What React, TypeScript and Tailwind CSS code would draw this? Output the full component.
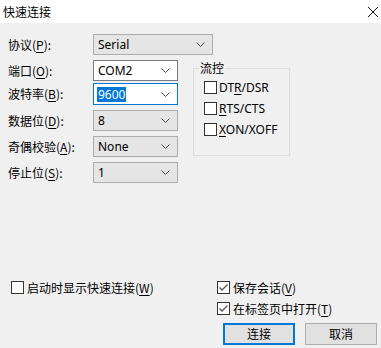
import React from "react";

const CJK = '"Noto Sans CJK SC", "Noto Sans", sans-serif';
const LAT = '"Noto Sans", "Noto Sans CJK SC", sans-serif';

function Chevron() {
  return (
    <svg width="9" height="5" viewBox="0 0 9 5" className="shrink-0">
      <path d="M0.5 0.5 L4.5 4.5 L8.5 0.5" fill="none" stroke="#444" strokeWidth="1" />
    </svg>
  );
}

function Box({ checked }: { checked?: boolean }) {
  return (
    <div className="w-[13px] h-[13px] border border-[#333] bg-white shrink-0 flex items-center justify-center">
      {checked && (
        <svg width="11" height="11" viewBox="0 0 11 11">
          <path d="M1.5 5.5 L4 8 L9.5 2.5" fill="none" stroke="#555" strokeWidth="1.3" />
        </svg>
      )}
    </div>
  );
}

function Label({ text, k }: { text: string; k: string }) {
  return (
    <div className="w-[85px] shrink-0 text-[12px] text-black leading-none" style={{ fontFamily: CJK }}>
      {text}(<span className="underline underline-offset-2">{k}</span>):
    </div>
  );
}

function Combo({
  value,
  w,
  variant,
  h = 21,
}: {
  value: string;
  w: string;
  variant: "list" | "edit" | "focus";
  h?: number;
}) {
  const cls =
    variant === "list"
      ? "bg-[#e5e5e5] border-[#adadad]"
      : variant === "edit"
      ? "bg-white border-[#7a7a7a]"
      : "bg-white border-[#0078d7]";
  return (
    <div
      className={`${w} ${cls} shrink-0 border flex items-center justify-between pl-[3px] pr-[7px]`}
      style={{ height: h }}
    >
      {variant === "focus" ? (
        <span className="text-[12px] leading-[15px] bg-[#0078d7] text-white px-[1px]" style={{ fontFamily: LAT }}>
          {value}
        </span>
      ) : (
        <span className="text-[12px] leading-none text-black pl-[1px]" style={{ fontFamily: LAT }}>
          {value}
        </span>
      )}
      <Chevron />
    </div>
  );
}

function Check({ label, k, checked }: { label: string; k: string; checked?: boolean }) {
  return (
    <div className="flex items-center gap-[3px] h-[13px]">
      <Box checked={checked} />
      <span className="text-[12px] leading-none text-black whitespace-nowrap" style={{ fontFamily: CJK }}>
        {label}(<span className="underline underline-offset-2">{k}</span>)
      </span>
    </div>
  );
}

function FlowCheck({ pre, k, post }: { pre: string; k: string; post: string }) {
  return (
    <div className="flex items-center gap-[2px] h-[13px]">
      <Box />
      <span className="text-[12px] leading-none text-black whitespace-nowrap" style={{ fontFamily: LAT }}>
        {pre}
        <span className="underline underline-offset-2">{k}</span>
        {post}
      </span>
    </div>
  );
}

export default function App() {
  return (
    <div className="w-[381px] h-[348px] bg-[#f0f0f0] flex flex-col overflow-hidden">
      {/* title bar */}
      <div className="h-[23px] bg-white flex items-center justify-between pl-[3px] pr-[1px] shrink-0">
        <span className="text-[12px] leading-none text-black" style={{ fontFamily: CJK }}>
          快速连接
        </span>
        <svg width="12" height="12" viewBox="0 0 12 12" className="mr-[1px]">
          <path d="M1 1 L11 11 M11 1 L1 11" stroke="#111" strokeWidth="1" />
        </svg>
      </div>

      {/* top section */}
      <div className="flex pl-[8px]">
        <div className="w-[185px] shrink-0 pt-[11px] flex flex-col">
          <div className="flex items-center">
            <Label text="协议" k="P" />
            <Combo value="Serial" w="w-[120px]" variant="list" />
          </div>
          <div className="flex items-center mt-[5px]">
            <Label text="端口" k="O" />
            <Combo value="COM2" w="w-[85px]" variant="edit" />
          </div>
          <div className="flex items-center mt-[2px]">
            <Label text="波特率" k="B" />
            <Combo value="9600" w="w-[85px]" variant="focus" h={22} />
          </div>
          <div className="flex items-center mt-[5px]">
            <Label text="数据位" k="D" />
            <Combo value="8" w="w-[85px]" variant="list" />
          </div>
          <div className="flex items-center mt-[5px]">
            <Label text="奇偶校验" k="A" />
            <Combo value="None" w="w-[85px]" variant="list" />
          </div>
          <div className="flex items-center mt-[5px]">
            <Label text="停止位" k="S" />
            <Combo value="1" w="w-[85px]" variant="list" />
          </div>
        </div>

        <fieldset className="mt-[38px] w-[97px] h-[95px] shrink-0 border border-[#dcdcdc] pl-[10px] flex flex-col">
          <legend
            className="-ml-[5px] px-[1px] text-[12px] leading-[14px] text-black"
            style={{ fontFamily: CJK }}
          >
            流控
          </legend>
          <div className="flex flex-col gap-[8px] mt-[6px]">
            <FlowCheck pre="DT" k="R" post="/DSR" />
            <FlowCheck pre="" k="R" post="TS/CTS" />
            <FlowCheck pre="" k="X" post="ON/XOFF" />
          </div>
        </fieldset>
      </div>

      {/* bottom section */}
      <div className="mt-auto flex flex-col pb-[3px]">
        <div className="flex pl-[11px]">
          <div className="w-[206px]">
            <Check label="启动时显示快速连接" k="W" />
          </div>
          <Check label="保存会话" k="V" checked />
        </div>
        <div className="flex pl-[217px] mt-[8px]">
          <Check label="在标签页中打开" k="T" checked />
        </div>
        <div className="flex pl-[223px] gap-[10px] mt-[8px]">
          <button
            className="w-[72px] h-[22px] bg-[#e1e1e1] border-2 border-[#0078d7] text-[12px] leading-none text-black flex items-center justify-center"
            style={{ fontFamily: CJK }}
          >
            连接
          </button>
          <button
            className="w-[72px] h-[22px] bg-[#e1e1e1] border border-[#adadad] text-[12px] leading-none text-black flex items-center justify-center"
            style={{ fontFamily: CJK }}
          >
            取消
          </button>
        </div>
      </div>
    </div>
  );
}
